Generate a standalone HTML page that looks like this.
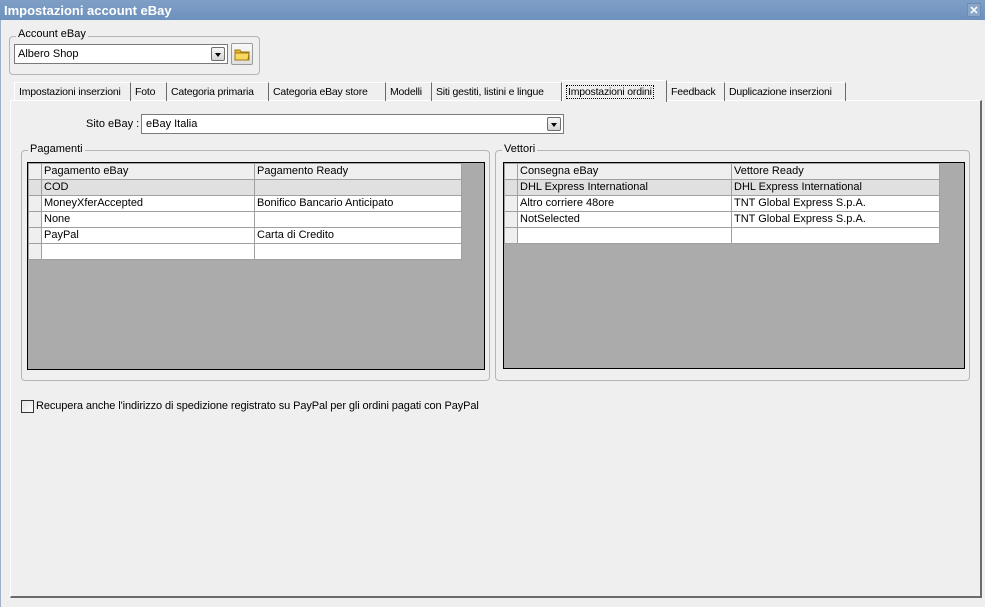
<!DOCTYPE html>
<html><head><meta charset="utf-8"><style>
*{box-sizing:border-box;margin:0;padding:0}
body{width:985px;height:607px;background:#efefef;font-family:"Liberation Sans",sans-serif;font-size:11px;color:#000;position:relative;overflow:hidden}
.abs{position:absolute}
.title{left:0;top:0;width:985px;height:20px;background:linear-gradient(#7f9fc6,#6d91bd);color:#fff;font-weight:bold;font-size:13px;padding:3px 0 0 4px}
.close{right:4px;top:3px;width:14px;height:14px;color:#fff;font-weight:bold;font-size:11px;line-height:14px;text-align:center;background:#8aa6c8;border:1px solid #6d8cb5}
.grp{border:1px solid #b5b5b5;border-radius:4px}
.lg{background:#efefef;padding:0 2px;top:-8px;left:6px;position:absolute}
.combo{background:#fff;border:1px solid #7a7a7a}
.dd{position:absolute;right:2px;top:2px;width:14px;height:14px;border:1px solid #6e6e6e;border-radius:2px;background:linear-gradient(#f7f7f7,#d5d5d5)}
.dd:after{content:"";position:absolute;left:3px;top:5px;border-left:3px solid transparent;border-right:3px solid transparent;border-top:4px solid #000}
.tab{top:82px;height:19px;border-top:1px solid #fff;border-right:1px solid #6b6b6b;padding:3px 0 0 4px;white-space:nowrap;font-size:10.5px;letter-spacing:-0.2px;overflow:hidden}
.panel{left:10px;top:100px;width:972px;height:498px;border-left:1px solid #fff;border-top:1px solid #fff;border-right:2px solid #6b6b6b;border-bottom:2px solid #6b6b6b}
.grid{background:#ababab;border:1px solid #000}
table{border-collapse:collapse;position:absolute;left:0;top:0;background:#fff}
td{height:16px;border:1px solid #a0a0a0;padding:1px 0 0 2px;white-space:nowrap;vertical-align:top;line-height:13px}
td.rh{width:13px;background:#efefef;padding:0}
tr.h td{background:#efefef}
tr.s td{background:#e0e0e0}
</style></head><body>
<div class="abs title">Impostazioni account eBay</div>
<div class="abs close">✕</div>
<div class="abs" style="left:0;top:20px;width:1px;height:587px;background:#9db0c8"></div>

<div class="abs grp" style="left:9px;top:36px;width:251px;height:39px"><span class="lg" style="top:-9px">Account eBay</span></div>
<div class="abs combo" style="left:14px;top:44px;width:214px;height:20px;padding:3px 0 0 3px">Albero Shop<div class="dd"></div></div>
<div class="abs" style="left:231px;top:43px;width:22px;height:22px;border:1px solid #9a9a9a;border-radius:2px;background:linear-gradient(#fafafa,#dedede)">
<svg width="20" height="20" viewBox="0 0 20 20"><path d="M3 6h5l1 2h8v8H3z" fill="#e8b830" stroke="#a07810"/><path d="M3 9h14l-1 7H3z" fill="#f8d860" stroke="#a07810"/></svg></div>

<div class="abs panel"></div>
<div class="abs tab" style="left:14px;width:117px;border-left:1px solid #fff">Impostazioni inserzioni</div>
<div class="abs tab" style="left:131px;width:36px">Foto</div>
<div class="abs tab" style="left:167px;width:102px">Categoria primaria</div>
<div class="abs tab" style="left:269px;width:117px">Categoria eBay store</div>
<div class="abs tab" style="left:386px;width:46px">Modelli</div>
<div class="abs tab" style="left:432px;width:130px">Siti gestiti, listini e lingue</div>
<div class="abs tab" style="left:562px;width:105px;top:80px;height:22px;background:#efefef;border-left:1px solid #fff;padding-top:5px"><span style="outline:1px dotted #000;padding:0 1px">Impostazioni ordini</span></div>
<div class="abs tab" style="left:667px;width:58px">Feedback</div>
<div class="abs tab" style="left:725px;width:121px">Duplicazione inserzioni</div>

<div class="abs" style="left:86px;top:118px">Sito eBay :</div>
<div class="abs combo" style="left:141px;top:114px;width:423px;height:20px;padding:3px 0 0 4px">eBay Italia<div class="dd"></div></div>

<div class="abs grp" style="left:21px;top:150px;width:469px;height:231px"><span class="lg">Pagamenti</span></div>
<div class="abs grid" style="left:27px;top:162px;width:458px;height:208px">
<table><tr class="h"><td class="rh"></td><td style="width:213px">Pagamento eBay</td><td style="width:207px">Pagamento Ready</td></tr>
<tr class="s"><td class="rh"></td><td>COD</td><td></td></tr>
<tr><td class="rh"></td><td>MoneyXferAccepted</td><td>Bonifico Bancario Anticipato</td></tr>
<tr><td class="rh"></td><td>None</td><td></td></tr>
<tr><td class="rh"></td><td>PayPal</td><td>Carta di Credito</td></tr>
<tr><td class="rh"></td><td></td><td></td></tr></table></div>

<div class="abs grp" style="left:495px;top:150px;width:475px;height:231px"><span class="lg">Vettori</span></div>
<div class="abs grid" style="left:503px;top:162px;width:462px;height:207px">
<table><tr class="h"><td class="rh"></td><td style="width:214px">Consegna eBay</td><td style="width:208px">Vettore Ready</td></tr>
<tr class="s"><td class="rh"></td><td>DHL Express International</td><td>DHL Express International</td></tr>
<tr><td class="rh"></td><td>Altro corriere 48ore</td><td>TNT Global Express S.p.A.</td></tr>
<tr><td class="rh"></td><td>NotSelected</td><td>TNT Global Express S.p.A.</td></tr>
<tr><td class="rh"></td><td></td><td></td></tr></table></div>

<div class="abs" style="left:21px;top:400px;width:13px;height:13px;border:1px solid #333;background:linear-gradient(135deg,#e4e4e4,#fafafa)"></div>
<div class="abs" style="left:36px;top:400px;letter-spacing:-0.1px">Recupera anche l'indirizzo di spedizione registrato su PayPal per gli ordini pagati con PayPal</div>
</body></html>
